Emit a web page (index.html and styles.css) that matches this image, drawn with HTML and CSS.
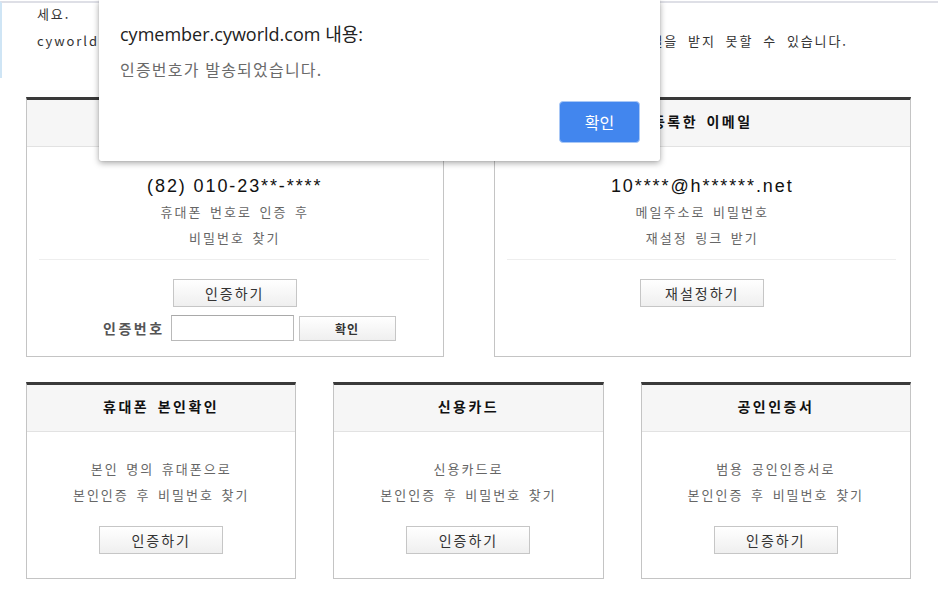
FILE: index.html
```html
<!DOCTYPE html>
<html lang="ko">
<head>
<meta charset="utf-8">
<title>비밀번호 찾기</title>
<link rel="stylesheet" href="styles.css">
</head>
<body>
<div class="notice">
  <p class="notice-line">세요.</p>
  <p class="notice-line">cyworld.com 도메인을 스팸으로 차단하신 경우 메일함 용량이 초과된 경우에는 인증 메일을 받지 못할 수 있습니다.</p>
</div>

<div class="row row-two">
  <section class="card">
    <h2 class="card-head">등록한 휴대폰 번호</h2>
    <div class="card-body body-tall">
      <p class="masked">(82) 010-23**-****</p>
      <p class="desc">휴대폰 번호로 인증 후</p>
      <p class="desc">비밀번호 찾기</p>
      <hr class="divider">
      <button class="btn btn-main" type="button">인증하기</button>
      <div class="code-row">
        <label class="code-label" for="code">인증번호</label>
        <input class="code-input" id="code" type="text">
        <button class="btn btn-small" type="button">확인</button>
      </div>
    </div>
  </section>
  <section class="card">
    <h2 class="card-head">등록한 이메일</h2>
    <div class="card-body body-tall">
      <p class="masked">10****@h******.net</p>
      <p class="desc">메일주소로 비밀번호</p>
      <p class="desc">재설정 링크 받기</p>
      <hr class="divider">
      <button class="btn btn-main" type="button">재설정하기</button>
    </div>
  </section>
</div>

<div class="row row-three">
  <section class="card">
    <h2 class="card-head">휴대폰 본인확인</h2>
    <div class="card-body body-short">
      <p class="desc">본인 명의 휴대폰으로</p>
      <p class="desc">본인인증 후 비밀번호 찾기</p>
      <button class="btn btn-main btn-gap" type="button">인증하기</button>
    </div>
  </section>
  <section class="card">
    <h2 class="card-head">신용카드</h2>
    <div class="card-body body-short">
      <p class="desc">신용카드로</p>
      <p class="desc">본인인증 후 비밀번호 찾기</p>
      <button class="btn btn-main btn-gap" type="button">인증하기</button>
    </div>
  </section>
  <section class="card">
    <h2 class="card-head">공인인증서</h2>
    <div class="card-body body-short">
      <p class="desc">범용 공인인증서로</p>
      <p class="desc">본인인증 후 비밀번호 찾기</p>
      <button class="btn btn-main btn-gap" type="button">인증하기</button>
    </div>
  </section>
</div>

<div class="dialog" role="alertdialog">
  <p class="dialog-title">cymember.cyworld.com 내용:</p>
  <p class="dialog-msg">인증번호가 발송되었습니다.</p>
  <div class="dialog-actions">
    <button class="dialog-ok" type="button">확인</button>
  </div>
</div>
</body>
</html>
```

FILE: styles.css
```css
* { box-sizing: border-box; }

html, body {
  margin: 0;
  padding: 0;
  background: #fff;
}

body {
  width: 938px;
  height: 596px;
  overflow: hidden;
  position: relative;
  font-family: "Noto Sans CJK KR", "Liberation Sans", sans-serif;
  color: #333;
}

p { margin: 0; }

/* top notice */
.notice {
  margin-top: 1px;
  height: 77px;
  border-top: 2px solid #dedfe6;
  border-left: 2px solid #cfe5f5;
  padding-left: 35px;
}

.notice-line {
  font-size: 13px;
  line-height: 27px;
  letter-spacing: 1.9px;
  word-spacing: 4.3px;
  color: #333;
  white-space: nowrap;
}

.notice-line:first-child { margin-top: -3px; }

/* rows of cards */
.row {
  display: grid;
  width: 885px;
  margin-left: 26px;
}

.row-two {
  grid-template-columns: 1fr 1fr;
  gap: 50px;
  margin-top: 19px;
}

.row-three {
  grid-template-columns: 1fr 1fr 1fr;
  gap: 37px;
  margin-top: 25px;
}

.card {
  border: 1px solid #c4c4c4;
  border-top: 3px solid #3a3a3a;
  background: #fff;
}

.card-head {
  margin: 0;
  height: 47px;
  background: #f6f6f6;
  border-bottom: 1px solid #e2e2e2;
  font-size: 14px;
  font-weight: bold;
  letter-spacing: 2.5px;
  word-spacing: 2px;
  line-height: 42px;
  text-align: center;
  color: #111;
}

.card-body {
  display: flex;
  flex-direction: column;
  align-items: center;
}

.body-tall {
  padding: 26px 0 15px;
}

.body-short {
  padding: 24px 0 24px;
}

.masked {
  font-family: "Liberation Sans", Arial, sans-serif;
  font-size: 18px;
  letter-spacing: 1.9px;
  line-height: 26px;
  color: #111;
}

.desc {
  font-size: 13px;
  line-height: 26px;
  letter-spacing: 2px;
  word-spacing: 2px;
  color: #666;
}

.divider {
  align-self: stretch;
  margin: 8px 14px 0 12px;
  border: 0;
  border-top: 1px solid #eeeeee;
  height: 0;
}

.btn {
  font-family: "Noto Sans CJK KR", sans-serif;
  color: #333;
  background: linear-gradient(#ffffff, #efefef);
  border: 1px solid #c6c6c6;
  border-radius: 0;
  padding: 0;
  cursor: pointer;
}

.btn-main {
  width: 124px;
  height: 28px;
  margin-top: 19px;
  font-size: 14px;
  letter-spacing: 2px;
}

.btn-gap { margin-top: 18px; }

.code-row {
  align-self: flex-start;
  display: flex;
  align-items: center;
  margin: 7px 0 0 76px;
  height: 27px;
}

.code-label {
  font-size: 14px;
  font-weight: bold;
  letter-spacing: 2.5px;
  color: #555;
  margin-right: 6px;
}

.code-input {
  width: 123px;
  height: 26px;
  border: 1px solid #b9b9b9;
  border-top-color: #a9a9a9;
  margin: 0;
  padding: 0 4px;
}

.btn-small {
  width: 97px;
  height: 25px;
  margin-left: 5px;
  margin-top: 2px;
  font-size: 12px;
  font-weight: bold;
  letter-spacing: 1px;
}

/* alert dialog */
.dialog {
  position: absolute;
  left: 99px;
  top: 0;
  width: 561px;
  height: 161px;
  background: #fff;
  border-radius: 0 0 2px 2px;
  box-shadow: 0 2px 6px rgba(0, 0, 0, 0.35), 0 0 1px rgba(0, 0, 0, 0.3);
  padding: 22px 20px 18px 21px;
  display: flex;
  flex-direction: column;
}

.dialog-title {
  font-family: "Open Sans", "Noto Sans CJK KR", sans-serif;
  font-size: 18px;
  line-height: 24px;
  color: #222;
}

.dialog-msg {
  margin-top: 12px;
  font-family: "Noto Sans CJK KR", sans-serif;
  font-size: 16px;
  line-height: 22px;
  letter-spacing: 1.2px;
  color: #6a6a6a;
}

.dialog-actions {
  margin-top: auto;
  display: flex;
  justify-content: flex-end;
}

.dialog-ok {
  width: 81px;
  height: 42px;
  background: #4286ee;
  border: 1px solid #a9c8f6;
  border-radius: 4px;
  color: #fff;
  font-family: "Noto Sans CJK KR", sans-serif;
  font-size: 16px;
  padding: 0;
}
```
